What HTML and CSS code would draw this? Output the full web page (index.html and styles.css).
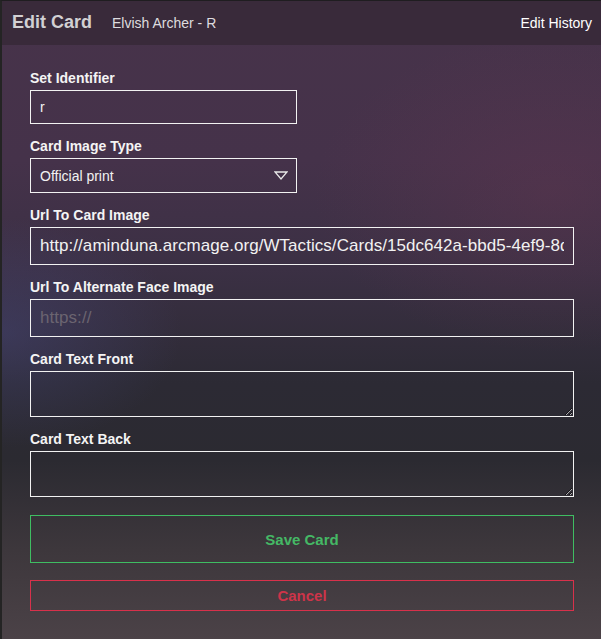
FILE: index.html
```html
<!DOCTYPE html>
<html lang="en">
<head>
<meta charset="utf-8">
<title>Edit Card</title>
<link rel="stylesheet" href="styles.css">
</head>
<body>
<div class="modal">
  <header class="modal-header">
    <h1 class="modal-title">Edit Card</h1>
    <span class="modal-subtitle">Elvish Archer - R</span>
    <a class="history-link" href="#">Edit History</a>
  </header>
  <form class="card-form">
    <div class="field">
      <label class="field-label" for="set">Set Identifier</label>
      <input class="text-input short-input" id="set" type="text" value="r">
    </div>
    <div class="field">
      <label class="field-label" for="imgtype">Card Image Type</label>
      <div class="select-wrap">
        <select class="select-input" id="imgtype">
          <option>Official print</option>
        </select>
        <svg class="select-arrow" width="14" height="9" viewBox="0 0 14 9"><polygon points="1,1 13,1 7,8" fill="none" stroke="#e8e8e8" stroke-width="1.3" stroke-linejoin="miter"/></svg>
      </div>
    </div>
    <div class="field">
      <label class="field-label" for="url">Url To Card Image</label>
      <input class="text-input url-input" id="url" type="text" value="http://aminduna.arcmage.org/WTactics/Cards/15dc642a-bbd5-4ef9-8d0c-7a1e3b2c9f10.jpg">
    </div>
    <div class="field">
      <label class="field-label" for="alt">Url To Alternate Face Image</label>
      <input class="text-input url-input" id="alt" type="text" placeholder="https://">
    </div>
    <div class="field">
      <label class="field-label" for="front">Card Text Front</label>
      <textarea class="text-area" id="front"></textarea>
    </div>
    <div class="field">
      <label class="field-label" for="back">Card Text Back</label>
      <textarea class="text-area" id="back"></textarea>
    </div>
    <div class="actions">
      <button class="btn btn-save" type="button">Save Card</button>
      <button class="btn btn-cancel" type="button">Cancel</button>
    </div>
  </form>
</div>
</body>
</html>
```

FILE: styles.css
```css
* { box-sizing: border-box; }

html, body {
  margin: 0;
  padding: 0;
  background: #232323;
  font-family: "Liberation Sans", Arial, sans-serif;
}

.modal {
  min-height: 639px;
  border-left: 2px solid #242424;
  border-top: 1px solid #1f1d20;
  background:
    radial-gradient(ellipse 30% 18% at 0% 52%, rgba(72, 72, 125, 0.45), rgba(72, 72, 125, 0)),
    radial-gradient(ellipse 40% 25% at 92% 30%, rgba(105, 55, 82, 0.35), rgba(105, 55, 82, 0)),
    linear-gradient(180deg, #47334a 0%, #45324a 25%, #3b3044 42%, #2c2a34 60%, #2b2a31 72%, #3d373c 86%, #4b4247 100%);
}

.modal-header {
  height: 44px;
  display: flex;
  align-items: baseline;
  padding: 11px 9px 0 10px;
  background: #392a3a;
}

.modal-title {
  margin: 0;
  font-size: 18px;
  line-height: 20px;
  font-weight: bold;
  color: #d2d0d3;
}

.modal-subtitle {
  margin-left: 20px;
  font-size: 14px;
  line-height: 20px;
  color: #dedcdf;
}

.history-link {
  margin-left: auto;
  font-size: 14px;
  line-height: 20px;
  color: #ffffff;
  text-decoration: none;
}

.card-form {
  padding: 25px 27px 20px 28px;
  display: flex;
  flex-direction: column;
}

.field {
  display: flex;
  flex-direction: column;
  margin-bottom: 14px;
}

.field-label {
  font-size: 14px;
  line-height: 16px;
  font-weight: bold;
  color: #f4f4f4;
  margin-bottom: 4px;
}

.text-input,
.select-input,
.text-area {
  font-family: "Liberation Sans", Arial, sans-serif;
  background: transparent;
  border: 1px solid #f2f2f2;
  border-radius: 0;
  color: #f2f2f2;
  outline: none;
  margin: 0;
}

.text-input {
  padding: 0 9px;
}

.short-input {
  width: 267px;
  height: 34px;
  font-size: 14px;
}

.url-input {
  width: 100%;
  height: 38px;
  font-size: 17px;
  letter-spacing: 0.05px;
}

.url-input::placeholder {
  color: #6b6470;
}

.select-wrap {
  position: relative;
  width: 267px;
}

.select-input {
  -webkit-appearance: none;
  appearance: none;
  width: 267px;
  height: 35px;
  font-size: 14px;
  padding: 0 30px 0 9px;
}

.select-input option {
  background: #3a2b3b;
}

.select-arrow {
  position: absolute;
  right: 9px;
  top: 13px;
  pointer-events: none;
}

.text-area {
  width: 100%;
  height: 46px;
  padding: 6px 9px;
  font-size: 14px;
  resize: vertical;
  color-scheme: dark;
}

.actions {
  display: flex;
  flex-direction: column;
  margin-top: 4px;
}

.btn {
  -webkit-appearance: none;
  appearance: none;
  width: 100%;
  background: transparent;
  font-family: "Liberation Sans", Arial, sans-serif;
  font-size: 15px;
  font-weight: bold;
  border-radius: 0;
  padding: 0;
  margin: 0;
  cursor: pointer;
}

.btn-save {
  height: 48px;
  border: 1px solid #3fbd62;
  color: #45b865;
  margin-bottom: 17px;
}

.btn-cancel {
  height: 31px;
  border: 1px solid #d8314b;
  color: #cd3449;
}
```
